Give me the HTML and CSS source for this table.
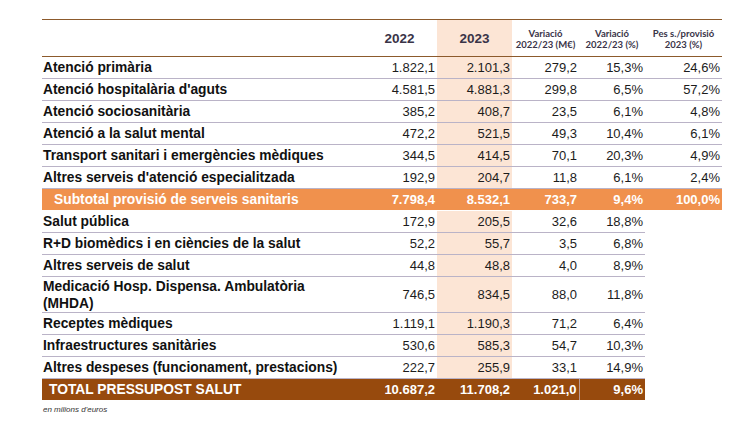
FILE: index.html
```html
<!DOCTYPE html>
<html lang="ca">
<head>
<meta charset="utf-8">
<title>Pressupost Salut</title>
<link rel="stylesheet" href="styles.css">
</head>
<body>
<div class="wrap">
<table class="budget">
  <colgroup>
    <col class="c-label"><col class="c-y"><col class="c-y"><col class="c-var"><col class="c-pct"><col class="c-pes">
  </colgroup>
  <thead>
    <tr>
      <th></th>
      <th class="year">2022</th>
      <th class="year shade">2023</th>
      <th class="small">Variació<br>2022/23 (M€)</th>
      <th class="small">Variació<br>2022/23 (%)</th>
      <th class="small">Pes s./provisió<br>2023 (%)</th>
    </tr>
  </thead>
  <tbody>
    <tr><td class="label">Atenció primària</td><td>1.822,1</td><td class="shade">2.101,3</td><td>279,2</td><td>15,3%</td><td>24,6%</td></tr>
    <tr><td class="label">Atenció hospitalària d'aguts</td><td>4.581,5</td><td class="shade">4.881,3</td><td>299,8</td><td>6,5%</td><td>57,2%</td></tr>
    <tr><td class="label">Atenció sociosanitària</td><td>385,2</td><td class="shade">408,7</td><td>23,5</td><td>6,1%</td><td>4,8%</td></tr>
    <tr><td class="label">Atenció a la salut mental</td><td>472,2</td><td class="shade">521,5</td><td>49,3</td><td>10,4%</td><td>6,1%</td></tr>
    <tr><td class="label">Transport sanitari i emergències mèdiques</td><td>344,5</td><td class="shade">414,5</td><td>70,1</td><td>20,3%</td><td>4,9%</td></tr>
    <tr><td class="label">Altres serveis d'atenció especialitzada</td><td>192,9</td><td class="shade">204,7</td><td>11,8</td><td>6,1%</td><td>2,4%</td></tr>
    <tr class="subtotal"><td class="label">Subtotal provisió de serveis sanitaris</td><td>7.798,4</td><td>8.532,1</td><td>733,7</td><td>9,4%</td><td>100,0%</td></tr>
    <tr><td class="label">Salut pública</td><td>172,9</td><td class="shade">205,5</td><td>32,6</td><td>18,8%</td><td class="blank"></td></tr>
    <tr><td class="label">R+D biomèdics i en ciències de la salut</td><td>52,2</td><td class="shade">55,7</td><td>3,5</td><td>6,8%</td><td class="blank"></td></tr>
    <tr><td class="label">Altres serveis de salut</td><td>44,8</td><td class="shade">48,8</td><td>4,0</td><td>8,9%</td><td class="blank"></td></tr>
    <tr class="tall"><td class="label">Medicació Hosp. Dispensa. Ambulatòria<br>(MHDA)</td><td>746,5</td><td class="shade">834,5</td><td>88,0</td><td>11,8%</td><td class="blank"></td></tr>
    <tr><td class="label">Receptes mèdiques</td><td>1.119,1</td><td class="shade">1.190,3</td><td>71,2</td><td>6,4%</td><td class="blank"></td></tr>
    <tr><td class="label">Infraestructures sanitàries</td><td>530,6</td><td class="shade">585,3</td><td>54,7</td><td>10,3%</td><td class="blank"></td></tr>
    <tr><td class="label">Altres despeses (funcionament, prestacions)</td><td>222,7</td><td class="shade">255,9</td><td>33,1</td><td>14,9%</td><td class="blank"></td></tr>
    <tr class="total"><td class="label">TOTAL PRESSUPOST SALUT</td><td>10.687,2</td><td>11.708,2</td><td>1.021,0</td><td class="divided">9,6%</td><td class="blank"></td></tr>
  </tbody>
</table>
<p class="note">en milions d'euros</p>
</div>
</body>
</html>
```

FILE: styles.css
```css
body {
  margin: 0;
  background: #ffffff;
  font-family: "Liberation Sans", Arial, sans-serif;
}

.wrap {
  padding: 19px 0 0 42px;
}

.budget {
  border-collapse: collapse;
  table-layout: fixed;
  width: 680px;
}

.c-label { width: 320px; }
.c-y { width: 75px; }
.c-var { width: 67px; }
.c-pct { width: 66px; }
.c-pes { width: 77px; }

.budget thead th {
  border-top: 1px solid #8c5a2c;
  border-bottom: 1px solid #8c5a2c;
  height: 35px;
  padding: 0;
  text-align: center;
  color: #3a3448;
}

.budget th.year {
  font-size: 13.5px;
  font-weight: bold;
}

.budget th.small {
  font-family: "Lato", "Liberation Sans", sans-serif;
  font-size: 9.5px;
  line-height: 11px;
  font-weight: 700;
  padding-top: 1px;
}

.budget td {
  height: 21px;
  padding: 0 2px 0 0;
  line-height: 21px;
  font-size: 13px;
  color: #1c1c1c;
  text-align: right;
  border-bottom: 1px solid #bab3c7;
  white-space: nowrap;
}

.budget td.label {
  text-align: left;
  font-weight: bold;
  font-size: 13.8px;
  color: #111111;
  padding-left: 1px;
}

.shade {
  background: #fce5d5;
}

.budget td.blank {
  border-bottom: none;
  background: #ffffff;
}

.budget tr.tall td {
  height: 35px;
}

.budget tr.tall td.label {
  line-height: 17px;
  white-space: normal;
}

.budget tr.subtotal td {
  background: #f0914d;
  color: #ffffff;
  font-weight: bold;
  border-bottom: 1px solid #ffffff;
}

.budget tr.subtotal td.label {
  padding-left: 12px;
}

.budget tr.total td {
  background: #974a0d;
  color: #ffffff;
  font-weight: bold;
  border-bottom: none;
}

.budget tr.total td.label {
  padding-left: 7px;
}

.budget tr.total td.divided {
  border-left: 1px solid #b99a94;
}

.budget tr.total td.blank {
  background: #ffffff;
}

.note {
  margin: 5px 0 0 1px;
  font-family: "Liberation Sans", Arial, sans-serif;
  font-style: italic;
  font-size: 8px;
  color: #333333;
}
```
